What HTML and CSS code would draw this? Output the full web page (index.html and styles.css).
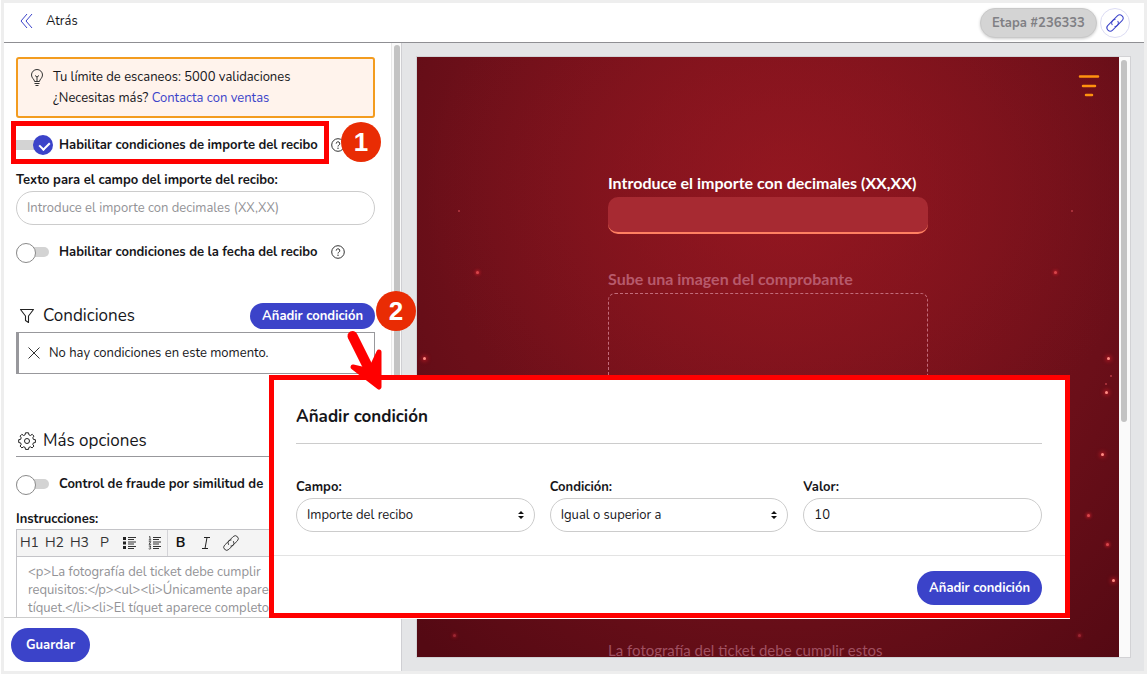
FILE: index.html
```
<!DOCTYPE html>
<html lang="es">
<head>
<meta charset="utf-8">
<title>Etapa #236333</title>
<link rel="stylesheet" href="styles.css">
</head>
<body>
<svg class="defs" aria-hidden="true">
  <symbol id="chain" viewBox="0 0 24 24"><g fill="none" stroke="currentColor" stroke-width="1.200" stroke-linecap="round" transform="rotate(-45 12 12)"><path d="M9 14.800a4 4 0 0 0 3 1.200h8a4 4 0 0 0 0-8h-8a4 4 0 0 0-3.800 3"/><path d="M15 9.200A4 4 0 0 0 12 8H4a4 4 0 0 0 0 8h8a4 4 0 0 0 3.800-3"/></g></symbol>
  <symbol id="help" viewBox="0 0 14 14"><circle cx="7" cy="7" r="6.300" fill="none" stroke="#333" stroke-width="1"/><path d="M5.200 5.600a1.800 1.800 0 1 1 2.600 1.600c-.6.300-.8.600-.8 1.300" fill="none" stroke="#333"/><circle cx="7" cy="10.300" r=".7" fill="#333"/></symbol>
</svg>
<div class="app">
  <header class="topbar">
    <a class="back" href="#"><svg class="back-icon" viewBox="0 0 14 14"><path d="M7 0 1 7l6 7M12 0 6 7l6 7" fill="none" stroke="#3b43c9" stroke-width="1"/></svg>Atrás</a>
    <div class="topbar-actions">
      <button class="stage" type="button">Etapa #236333</button>
      <button class="link-button" type="button" aria-label="Copiar enlace"><svg viewBox="0 0 24 24"><use href="#chain"/></svg></button>
    </div>
  </header>
  <div class="workspace">
    <aside class="sidebar">
      <div class="scroll-area">
        <form class="settings">
          <div class="alert">
            <svg class="bulb" viewBox="0 0 14 18"><g fill="none" stroke="#333" stroke-width="1"><path d="M4.500 12.500c0-2.300-3-3.200-3-6.500a5.500 5.500 0 0 1 11 0c0 3.300-3 4.200-3 6.500z"/><path d="M4.500 14.500h5M5.500 16.500h3M5 6.500l2 1.500 2-1.500M7 8v4"/></g></svg>
            <p>Tu límite de escaneos: 5000 validaciones<br>¿Necesitas más? <a href="#">Contacta con ventas</a></p>
          </div>
          <div class="toggle-row first-row">
            <label class="toggle-label"><input class="switch" type="checkbox" checked>Habilitar condiciones de importe del recibo</label>
            <svg class="help"><use href="#help"/></svg>
            <span class="highlight"></span>
            <span class="step step-one">1</span>
          </div>
          <label class="field-label" for="amount-text">Texto para el campo del importe del recibo:</label>
          <input class="field" id="amount-text" type="text" placeholder="Introduce el importe con decimales (XX,XX)">
          <div class="toggle-row date-row">
            <label class="toggle-label"><input class="switch" type="checkbox">Habilitar condiciones de la fecha del recibo</label>
            <svg class="help"><use href="#help"/></svg>
          </div>
          <div class="section-head">
            <h2><svg class="section-icon" viewBox="0 0 18 18"><path d="M2.500 2.500h13L10.500 9v6.500l-3-2V9z" fill="none" stroke="#222" stroke-width="1.100" stroke-linejoin="round"/></svg>Condiciones</h2>
            <button class="primary small" type="button">Añadir condición</button>
            <span class="step step-two">2</span>
            <svg class="arrow" viewBox="0 0 40 62"><path d="M10.500 7 30 46" fill="none" stroke="#f00" stroke-width="10" stroke-linecap="round"/><path d="M11 38 37 58 37 23 28 42z" fill="#f00" stroke="#f00" stroke-width="5" stroke-linejoin="round"/></svg>
          </div>
          <div class="empty"><svg viewBox="0 0 12 12"><path d="M.5.500l11 11m0-11-11 11" stroke="#333" stroke-width="1"/></svg>No hay condiciones en este momento.</div>
          <h2 class="more"><svg class="section-icon" viewBox="0 0 18 18"><g fill="none" stroke="#222" stroke-width="1" stroke-linejoin="round"><circle cx="9" cy="9" r="2.500"/><path d="M7.500.800h3l.4 2 1.500.700 1.800-1.200 1.700 1.800-1.100 1.700.6 1.600 2 .3v2.800l-2 .4-.6 1.500 1.100 1.700-1.800 1.800-1.700-1.100-1.500.6-.4 2h-3l-.4-2-1.500-.6-1.700 1.100-1.800-1.800 1.100-1.700-.6-1.500-1.900-.4V7.700l1.900-.3.600-1.600-1.100-1.700 1.800-1.800 1.700 1.200 1.500-.7z"/></g></svg>Más opciones</h2>
          <div class="toggle-row fraud-row">
            <label class="toggle-label"><input class="switch" type="checkbox">Control de fraude por similitud de</label>
          </div>
          <label class="field-label" for="instructions">Instrucciones:</label>
          <div class="editor">
            <div class="tools">
              <button type="button">H1</button><button type="button">H2</button><button type="button">H3</button><button type="button">P</button>
              <button type="button" aria-label="Lista"><svg viewBox="0 0 14 14"><path d="M0 1h3v3H0zM0 5.500h3v3H0zM0 10h3v3H0z" fill="#222"/><path d="M5 1.500h8M5 3.500h6M5 6h8M5 8h6M5 10.500h8M5 12.500h6" stroke="#333" stroke-width="1"/></svg></button>
              <button type="button" aria-label="Lista numerada"><svg viewBox="0 0 14 14"><path d="M1 1l1-.5V4M.8 4h2.400M.8 5.700h2L1 8.300h2.200M.8 10h2L1.800 11.300q1.400.2.900 1.400-.8.700-2 0" fill="none" stroke="#222" stroke-width=".8"/><path d="M5 1.500h8M5 3.500h6M5 6h8M5 8h6M5 10.500h8M5 12.500h6" stroke="#333" stroke-width="1"/></svg></button>
              <span class="divider"></span>
              <button class="bold" type="button">B</button>
              <button type="button" aria-label="Cursiva"><svg viewBox="0 0 14 14"><path d="M5 1.500h6M3 12.500h6M8 1.500l-2 11" fill="none" stroke="#222"/></svg></button>
              <button type="button" aria-label="Enlace"><svg class="tool-link" viewBox="0 0 24 24"><use href="#chain"/></svg></button>
            </div>
            <textarea id="instructions" placeholder="&lt;p&gt;La fotografía del ticket debe cumplir&#10;requisitos:&lt;/p&gt;&lt;ul&gt;&lt;li&gt;Únicamente aparece&#10;tíquet.&lt;/li&gt;&lt;li&gt;El tíquet aparece completo"></textarea>
          </div>
        </form>
        <div class="track"><div class="thumb side-thumb"></div></div>
      </div>
      <footer class="save-bar"><button class="primary" type="button">Guardar</button></footer>
    </aside>
    <main class="preview">
      <div class="device">
        <div class="screen">
          <svg class="menu" viewBox="0 0 22 24"><path d="M2 2.500h18M5 12h12M8 21h6" stroke="#ff920f" stroke-width="2.500" stroke-linecap="round"/></svg>
          <div class="sparks">
            <i class="spark tiny" style="left:6%;top:25.700%"></i>
            <i class="spark" style="left:8.500%;top:35.800%"></i>
            <i class="spark bright" style="left:1%;top:50.200%"></i>
            <i class="spark tiny" style="left:93.300%;top:25.700%"></i>
            <i class="spark" style="left:90.900%;top:35.800%"></i>
            <i class="spark bright" style="left:98.400%;top:50.200%"></i>
            <i class="spark tiny" style="left:98.900%;top:53.100%"></i>
            <i class="spark tiny" style="left:98.100%;top:54.500%"></i>
            <i class="spark bright" style="left:98.100%;top:55.900%"></i>
            <i class="spark bright" style="left:97.600%;top:66.200%"></i>
            <i class="spark" style="left:95.600%;top:76.300%"></i>
            <i class="spark" style="left:98.300%;top:81.100%"></i>
            <i class="spark bright" style="left:99.200%;top:87.200%"></i>
            <i class="spark dim" style="left:94.300%;top:96.400%"></i>
            <i class="spark dim" style="left:5.200%;top:96.400%"></i>
          </div>
          <div class="receipt">
            <label for="receipt-amount">Introduce el importe con decimales (XX,XX)</label>
            <input id="receipt-amount" type="text">
            <span class="upload-label">Sube una imagen del comprobante</span>
            <div class="dropzone"></div>
            <p>La fotografía del ticket debe cumplir estos</p>
          </div>
        </div>
        <div class="device-track"><div class="thumb"></div></div>
      </div>
    </main>
    <section class="dialog" role="dialog" aria-labelledby="dialog-title">
      <div class="dialog-body">
        <h3 id="dialog-title">Añadir condición</h3>
        <div class="columns">
          <div><label class="field-label" for="f-field">Campo:</label><div class="select"><select class="field" id="f-field"><option>Importe del recibo</option></select><svg viewBox="0 0 6 8"><path d="M3 0 6 3H0zM3 8 0 5h6z" fill="#111"/></svg></div></div>
          <div><label class="field-label" for="f-cond">Condición:</label><div class="select"><select class="field" id="f-cond"><option>Igual o superior a</option></select><svg viewBox="0 0 6 8"><path d="M3 0 6 3H0zM3 8 0 5h6z" fill="#111"/></svg></div></div>
          <div><label class="field-label" for="f-value">Valor:</label><input class="field" id="f-value" type="text" value="10"></div>
        </div>
      </div>
      <div class="dialog-actions"><button class="primary" type="button">Añadir condición</button></div>
    </section>
  </div>
</div>
</body>
</html>
```
FILE: styles.css
```
* { box-sizing: border-box; }
html, body { height: 100%; }
body {
  margin: 0;
  padding: 0 0 1px 1px;
  font: 13px/20px "Nunito", "Open Sans", sans-serif;
  color: #16161a;
  background: #fff;
}
h2, h3, p { margin: 0; }
button, input, select, textarea { font: inherit; color: inherit; }
button { cursor: pointer; }
a { color: #3b43c9; text-decoration: none; }
.defs { position: absolute; width: 0; height: 0; }

.app {
  height: 100%;
  display: flex;
  flex-direction: column;
  border: 3px solid #eee;
  background: #fff;
}

.topbar {
  flex: none;
  height: 40px;
  padding: 0 14px 0 16px;
  display: flex;
  align-items: center;
  justify-content: space-between;
  border-bottom: 1px solid #8f8f93;
}
.back { display: flex; align-items: center; gap: 12px; color: #16161a; padding-bottom: 3px; }
.back-icon { width: 14px; height: 14px; }
.topbar-actions { display: flex; gap: 3px; align-items: center; }
.stage {
  height: 30px;
  padding: 0 10px;
  border: 1px solid #c9c9c9;
  border-radius: 15px;
  background: #d4d4d4;
  color: #808084;
  font-weight: 700;
  box-shadow: 0 1px 3px rgba(0, 0, 0, .2);
  min-width: 117px;
}
.link-button {
  width: 30px;
  height: 30px;
  padding: 4px;
  border: 1px solid #dcdcf4;
  border-radius: 50%;
  background: #fff;
  color: #3b43c9;
}
.link-button svg { display: block; width: 20px; height: 20px; }

.workspace { flex: 1; min-height: 0; display: flex; position: relative; }

.sidebar {
  flex: none;
  width: 398px;
  display: flex;
  flex-direction: column;
  border-right: 1px solid #cfcfd3;
}
.scroll-area { flex: 1; min-height: 0; display: flex; overflow-x: visible; overflow-y: clip; }
.settings { flex: 1; min-width: 0; padding: 14px 16px 0 12px; display: flex; flex-direction: column; }
.settings > * { flex: none; }
.track { flex: none; width: 10px; padding: 2px 2px 0; border-left: 1px solid #e8e8e8; background: #fafafa; }
.thumb { width: 6px; border-radius: 3px; background: #c3c3c3; height: 61%; }
.side-thumb { height: 72%; }

.alert {
  display: flex;
  gap: 10px;
  padding: 8px 13px 7px;
  border: 2px solid #f39c1f;
  border-radius: 3px;
  background: #fff3ec;
  line-height: 21px;
}
.bulb { width: 14px; height: 18px; margin: 2px -1px 0; flex: none; }

.toggle-row { position: relative; display: flex; align-items: center; gap: 13px; height: 20px; }
.toggle-label { display: flex; align-items: center; gap: 9px; font-weight: 700; white-space: nowrap; }
.first-row { margin-top: 17px; }
.date-row { margin-top: 17px; }
.fraud-row { margin-top: 17px; }
.help { width: 14px; height: 14px; flex: none; }

.switch {
  appearance: none;
  position: relative;
  width: 34px;
  height: 20px;
  margin: 0;
}
.switch::after {
  content: "";
  position: absolute;
  left: 0;
  top: 5px;
  width: 33px;
  height: 10px;
  border-radius: 5px;
  background: #d3d3d3;
}
.switch::before {
  content: "";
  position: absolute;
  z-index: 1;
  left: 0;
  top: 1px;
  width: 18px;
  height: 18px;
  border: 1px solid #8a8a8a;
  border-radius: 50%;
  background: #fff;
}
.switch:checked { background: linear-gradient(#d3d3d3, #d3d3d3) 0 5px / 33px 10px no-repeat; border-radius: 5px; }
.switch:checked::before { left: 17px; top: 0; width: 20px; height: 20px; border: 0; background: #3b43c9; }
.switch:checked::after {
  z-index: 2;
  left: 25px;
  top: 5px;
  width: 5px;
  height: 8px;
  border: solid #fff;
  border-width: 0 2px 2px 0;
  border-radius: 0;
  background: none;
  transform: rotate(45deg);
}

.highlight { position: absolute; left: -5px; right: 46px; top: -14px; height: 43px; border: 5px solid #f00; }
.step {
  position: absolute;
  width: 40px;
  height: 40px;
  border-radius: 50%;
  background: #e92c04;
  color: #fff;
  font: 700 26px/40px "Liberation Sans", Arial, sans-serif;
  text-align: center;
}
.step-one { right: -6px; top: -13px; }
.step-two { right: -41px; top: -12px; z-index: 3; }
.arrow { position: absolute; z-index: 5; right: -7px; top: 26px; width: 40px; height: 62px; }

.field-label { display: block; font-weight: 700; }
.settings > .field-label { margin-top: 15px; }
.field {
  display: block;
  width: 100%;
  height: 34px;
  padding: 0 10px;
  border: 1px solid #ccc;
  border-radius: 17px;
  background: #fff;
  outline: 0;
}
.settings > .field { margin-top: 1px; }
::placeholder { color: #929296; opacity: 1; }

.section-head { position: relative; margin-top: 41px; display: flex; align-items: center; justify-content: space-between; }
h2 { display: flex; align-items: center; gap: 7px; padding-left: 2px; font-size: 17px; line-height: 26px; font-weight: 400; }
.section-icon { width: 18px; height: 18px; }
.primary {
  height: 34px;
  padding: 0 15px;
  border: 0;
  border-radius: 17px;
  background: #3b43c9;
  color: #fff;
  font-weight: 700;
}
.primary.small { height: 26px; padding: 0 12px; }
.empty {
  display: flex;
  align-items: center;
  gap: 9px;
  height: 42px;
  margin-top: 3px;
  padding-left: 9px;
  border: 1px solid #98989c;
  border-left-width: 3px;
}
.empty svg { width: 12px; height: 12px; }
.more { margin-top: 54px; padding-bottom: 2px; border-bottom: 1px solid #98989c; }

.editor { border: 1px solid #c4c4c8; }
.tools { display: flex; align-items: center; height: 27px; border-bottom: 1px solid #c4c4c8; background: #f4f4f4; }
.tools button { width: 25px; height: 25px; padding: 0; border: 0; background: none; font-size: 14px; color: #333; }
.tools .bold { font-weight: 700; color: #111; }
.tools svg { display: block; width: 14px; height: 14px; margin: auto; }
.tools .tool-link { width: 18px; height: 18px; }
.divider { width: 1px; height: 26px; background: #d4d4d8; }
.editor textarea { display: block; width: 100%; height: 80px; padding: 6px 11px; border: 0; outline: 0; resize: none; line-height: 18px; overflow: hidden; }

.save-bar { flex: none; padding: 10px 7px 9px; border-top: 1px solid #ccc; background: #fff; }

.preview { flex: 1; min-width: 0; display: flex; padding: 13px 13px 13px 14px; background: #e4e5e7; }
.device { flex: 1; display: flex; border: 1px solid #d2d2d5; }
.screen {
  flex: 1;
  position: relative;
  overflow: hidden;
  padding-top: 114px;
  background:
    radial-gradient(ellipse 52% 50% at 53% 22%, rgba(154, 24, 34, .65), rgba(154, 24, 34, 0)),
    radial-gradient(ellipse 75% 100% at 52% 24%, #85141d, #6b0f19 65%, #540913);
}
.device-track { flex: none; width: 11px; padding: 3px 2px; background: #fafafa; }
.menu { position: absolute; right: 19px; top: 17px; width: 22px; height: 24px; }
.sparks { position: absolute; inset: 0; }
.spark { position: absolute; width: 3px; height: 3px; margin: -1px; border-radius: 50%; background: #d8474c; box-shadow: 0 0 3px 1px #b51d28; }
.spark.bright { background: #ff8d86; box-shadow: 0 0 4px 1px #c81e28; }
.spark.tiny { width: 2px; height: 2px; background: #b73a43; box-shadow: none; }
.spark.dim { background: #9b2733; box-shadow: 0 0 3px 1px #84121d; }

.receipt {
  position: relative;
  width: 320px;
  margin: 0 auto;
  font: 16px/24px "Lato", sans-serif;
  color: #fff;
}
.receipt label, .upload-label { display: block; font-weight: 700; }
.receipt input {
  display: block;
  width: 100%;
  height: 37px;
  margin-top: 2px;
  padding: 0 12px;
  border: 0;
  border-bottom: 2px solid #ff8062;
  border-radius: 10px;
  background: #a72a32;
  outline: 0;
}
.upload-label { margin-top: 33px; color: #b75a6c; }
.dropzone { height: 320px; margin-top: 2px; border: 1px dashed #c26c7b; border-radius: 7px; }
.receipt p { margin-top: 25px; font-size: 15px; color: #a05061; white-space: nowrap; }

.dialog {
  position: absolute;
  z-index: 4;
  left: 265px;
  right: 74px;
  bottom: 53px;
  border: 5px solid #f00;
  background: #fff;
  box-shadow: 0 1px 0 #fff;
}
.dialog-body { padding: 22px 23px 23px 22px; }
.dialog h3 { padding-bottom: 11px; border-bottom: 1px solid #ccc; font-size: 17px; line-height: 30px; font-weight: 700; }
.columns { display: grid; grid-template-columns: repeat(3, 1fr); gap: 15px; margin-top: 33px; }
.columns .field { margin-top: 1px; }
.select { position: relative; }
.select select { appearance: none; }
.select svg { position: absolute; right: 11px; top: 13px; width: 6px; height: 8px; pointer-events: none; }
.dialog-actions { display: flex; justify-content: flex-end; padding: 15px 23px 8px; border-top: 1px solid #e3e3e3; }
.dialog-actions .primary { padding: 0 12px; }
```
